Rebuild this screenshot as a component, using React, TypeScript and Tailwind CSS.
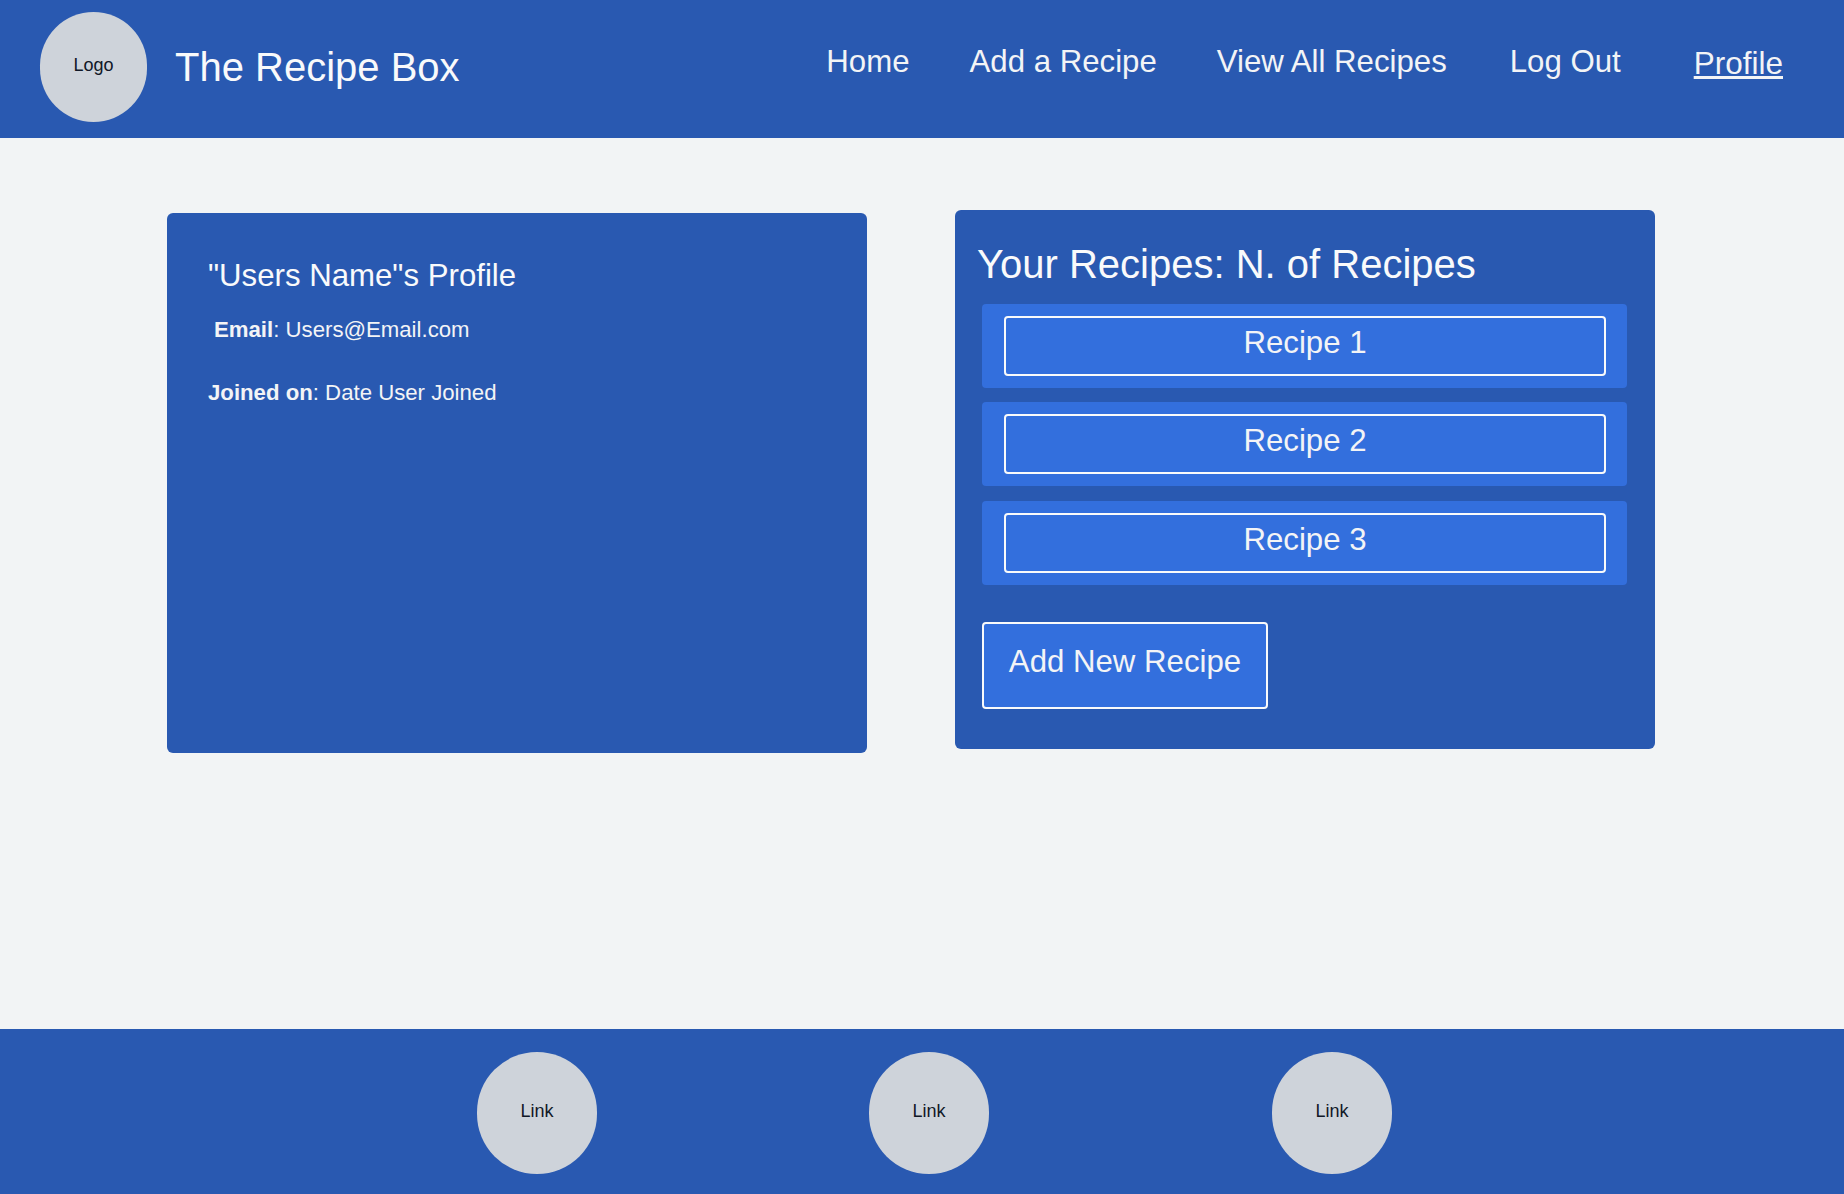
export default function App() {
  const sans = "font-['Liberation_Sans',Arial,sans-serif]";
  return (
    <div className={`${sans} flex h-[1194px] w-full flex-col bg-[#f2f4f5] text-[#f3f4f6]`}>
      <header className="flex h-[138px] shrink-0 items-start bg-[#2959b1]">
        <div className="ml-10 mt-3 flex h-[110px] w-[107px] items-center justify-center rounded-full bg-[#ced3da] pb-1 text-lg text-[#111827]">Logo</div>
        <h1 className="ml-7 mt-[46px] text-[40px] leading-[42px] text-[#f9fafb]">The Recipe Box</h1>
        <nav className="ml-auto mr-[61px] mt-11 flex items-start text-[31.2px] leading-9">
          <a>Home</a>
          <a className="ml-[60px]">Add a Recipe</a>
          <a className="ml-[60px]">View All Recipes</a>
          <a className="ml-[63px]">Log Out</a>
          <a className="ml-[73px] mt-px text-[31.5px] underline">Profile</a>
        </nav>
      </header>
      <main className="flex flex-1 items-start pl-[167px]">
        <section className="mt-[75px] h-[540px] w-[700px] rounded-md bg-[#2959b1] px-[41px] pt-[45px]">
          <h2 className="text-[31.2px] leading-9 text-[#f9fafb]">"Users Name"s Profile</h2>
          <p className="ml-[6px] mt-5 text-[22.2px] leading-8"><strong>Email</strong>: Users@Email.com</p>
          <p className="mt-[31px] text-[22.2px] leading-8"><strong>Joined on</strong>: Date User Joined</p>
        </section>
        <section className="ml-[88px] mt-[72px] h-[539px] w-[700px] rounded-md bg-[#2959b1] px-[22px] pt-[31px]">
          <h2 className="text-[40px] leading-[46px] text-[#f9fafb]">Your Recipes: N. of Recipes</h2>
          <ul className="ml-[5px] mr-[6px] mt-[17px] flex flex-col gap-[14px]">
            {["Recipe 1", "Recipe 2", "Recipe 3"].map((r) => (
              <li key={r} className="h-[84px] rounded-sm bg-[#336fdd] pl-[22px] pr-[21px] pt-3 last:mt-px">
                <div className="h-[60px] rounded-[4px] border-2 border-[#f9fafb] pt-px text-center text-[31.2px] leading-[48px]">{r}</div>
              </li>
            ))}
          </ul>
          <button className="ml-[5px] mt-[37px] block h-[87px] w-[286px] rounded-[4px] border-2 border-[#f9fafb] bg-[#336fdd] pb-[7px] text-center text-[31.2px] leading-9">Add New Recipe</button>
        </section>
      </main>
      <footer className="flex h-[165px] shrink-0 items-start bg-[#2959b1] pl-[477px] pt-[23px]">
        {[["Link", ""], ["Link", "ml-[272px]"], ["Link", "ml-[283px]"]].map(([t, m], i) => (
          <div key={i} className={`flex h-[122px] w-[120px] items-center justify-center rounded-full bg-[#ced3da] pb-[5px] text-lg text-[#111827] ${m}`}>{t}</div>
        ))}
      </footer>
    </div>
  );
}
